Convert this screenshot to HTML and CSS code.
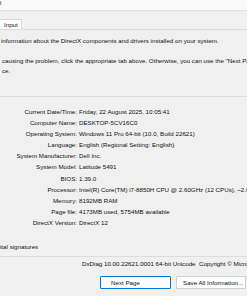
FILE: index.html
```html
<!DOCTYPE html>
<html lang="en">
<head>
    <meta charset="UTF-8">
    <title>DirectX Diagnostic Tool</title>
    <link rel="stylesheet" href="styles.css">
</head>
<body>
    <div class="window">
        <div class="titlebar">l</div>

        <div class="tabstrip">
            <div class="tab">Input</div>
        </div>

        <div class="intro">
            <p>information about the DirectX components and drivers installed on your system.</p>
            <p>causing the problem, click the appropriate tab above. Otherwise, you can use the "Next Page" button below to visit each page in sequence.<br>ce.</p>
        </div>

        <!-- System Information -->
        <div class="group">
            <div class="row"><span class="label">Current Date/Time:</span><span class="value">Friday, 22 August 2025, 10:05:41</span></div>
            <div class="row"><span class="label">Computer Name:</span><span class="value">DESKTOP-5CV16C0</span></div>
            <div class="row"><span class="label">Operating System:</span><span class="value">Windows 11 Pro 64-bit (10.0, Build 22621)</span></div>
            <div class="row"><span class="label">Language:</span><span class="value">English (Regional Setting: English)</span></div>
            <div class="row"><span class="label">System Manufacturer:</span><span class="value">Dell Inc.</span></div>
            <div class="row"><span class="label">System Model:</span><span class="value">Latitude 5491</span></div>
            <div class="row"><span class="label">BIOS:</span><span class="value">1.39.0</span></div>
            <div class="row"><span class="label">Processor:</span><span class="value">Intel(R) Core(TM) i7-8850H CPU @ 2.60GHz (12 CPUs), ~2.6GHz</span></div>
            <div class="row"><span class="label">Memory:</span><span class="value">8192MB RAM</span></div>
            <div class="row"><span class="label">Page file:</span><span class="value">4173MB used, 5754MB available</span></div>
            <div class="row"><span class="label">DirectX Version:</span><span class="value">DirectX 12</span></div>
        </div>

        <div class="signatures">ital signatures</div>

        <div class="footer">
            <div class="version">DxDiag 10.00.22621.0001 64-bit Unicode&nbsp; Copyright © Microsoft. All rights reserved.</div>
            <div class="buttons">
                <button class="btn btn-default">Next Page</button>
                <button class="btn">Save All Information...</button>
            </div>
        </div>
    </div>
</body>
</html>
```

FILE: styles.css
```css
body {
    margin: 0;
    padding: 0;
    background-color: #f0f0f0;
    font-family: "Liberation Sans", Arial, sans-serif;
    font-size: 6.2px;
    color: #111;
}
.window {
    width: 247px;
    height: 296px;
    overflow: hidden;
    white-space: nowrap;
}
.titlebar {
    height: 10px;
    line-height: 6px;
    background-color: #f9f9f9;
    border-bottom: 1px solid #dedede;
}
.tabstrip {
    margin-top: 8px;
    border-bottom: 1px solid #dcdcdc;
    height: 10px;
}
.tab {
    display: inline-block;
    width: 22px;
    height: 10px;
    line-height: 10px;
    box-sizing: border-box;
    padding-left: 4px;
    background-color: #ffffff;
    border: 1px solid #d9d9d9;
    border-left: none;
    border-bottom: none;
}
.intro {
    padding-top: 6px;
    padding-left: 1px;
}
.intro p {
    margin: 0 0 10px 0;
    line-height: 10px;
}
.intro p + p {
    padding-left: 1px;
}
.group {
    margin-top: 20px;
    border-top: 1px solid #dcdcdc;
    padding-top: 9px;
}
.row {
    display: flex;
    height: 11.1px;
    line-height: 11px;
}
.label {
    width: 77px;
    text-align: right;
    flex-shrink: 0;
}
.value {
    padding-left: 2px;
}
.signatures {
    margin-top: 13px;
    line-height: 11px;
}
.footer {
    margin-top: 4px;
    border-top: 1px solid #dcdcdc;
}
.version {
    padding-left: 82px;
    line-height: 10px;
    margin-top: 2px;
}
.buttons {
    display: flex;
    gap: 5px;
    padding-left: 100px;
    margin-top: 7px;
}
.btn {
    height: 13px;
    padding: 0 0 0 6px;
    text-align: left;
    font-family: inherit;
    font-size: inherit;
    color: #111;
    background-color: #fdfdfd;
    border: 1px solid #d0d0d0;
    border-radius: 1px;
    flex-shrink: 0;
}
.btn-default {
    width: 71px;
    padding-left: 10px;
    border-color: #0078d7;
}
.btn:not(.btn-default) {
    width: 70px;
}
```
